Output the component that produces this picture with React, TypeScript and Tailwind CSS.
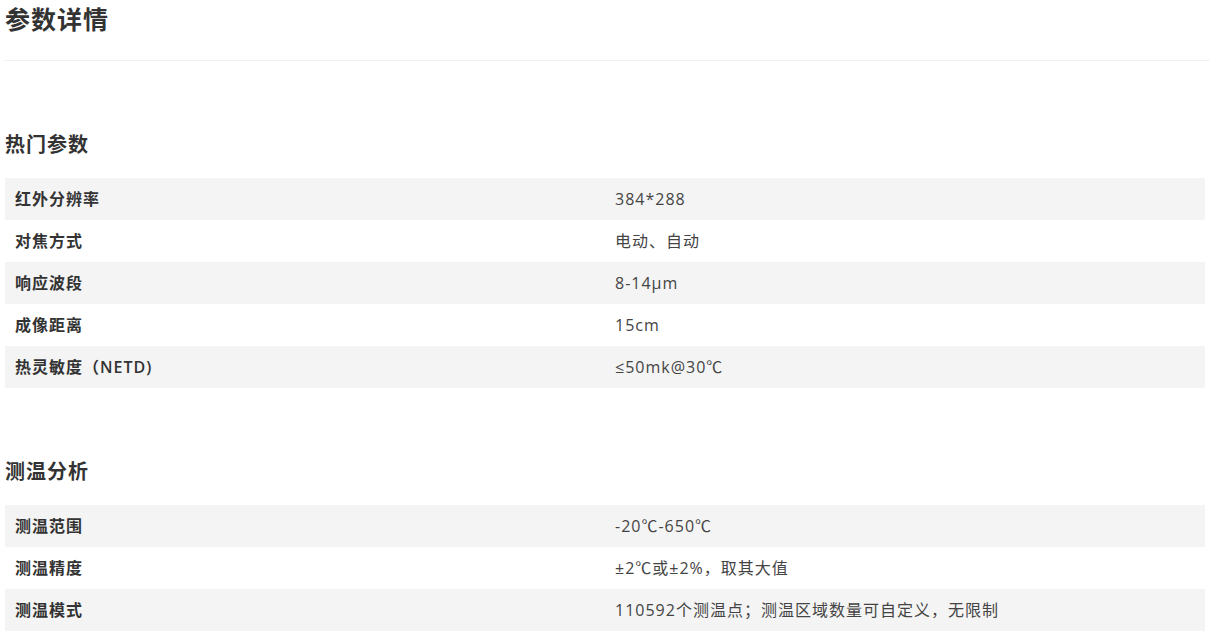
const sections = [
  {
    title: '热门参数',
    rows: [
      ['红外分辨率', '384*288'],
      ['对焦方式', '电动、自动'],
      ['响应波段', '8-14μm'],
      ['成像距离', '15cm'],
      ['热灵敏度（NETD)', '≤50mk@30℃'],
    ],
  },
  {
    title: '测温分析',
    rows: [
      ['测温范围', '-20℃-650℃'],
      ['测温精度', '±2℃或±2%，取其大值'],
      ['测温模式', '110592个测温点；测温区域数量可自定义，无限制'],
    ],
  },
]

export default function App() {
  return (
    <div
      className="min-h-screen bg-white px-[5px] text-[#333]"
      style={{ fontFamily: '"Open Sans", "Noto Sans CJK SC", sans-serif' }}
    >
      <div className="h-[60px]">
        <h1 className="text-[25px] font-bold leading-[38px] tracking-[1px] text-[#333]">参数详情</h1>
      </div>
      <div className="h-px bg-[#f0f0f0]" />

      {sections.map((section) => (
        <section key={section.title} className="mt-[69px]">
          <h2 className="mb-[18px] text-[20px] font-bold leading-[30px] tracking-[1px] text-[#333]">
            {section.title}
          </h2>
          <div className="w-[1200px]">
            {section.rows.map(([label, value], i) => (
              <div
                key={label}
                className={`grid h-[42px] grid-cols-2 items-center text-[16px] tracking-[1px] ${
                  i % 2 === 0 ? 'bg-[#f4f4f4]' : 'bg-white'
                }`}
              >
                <div className="px-[10px] font-semibold text-[#333]">{label}</div>
                <div className="px-[10px] text-[#444]">{value}</div>
              </div>
            ))}
          </div>
        </section>
      ))}
    </div>
  )
}
